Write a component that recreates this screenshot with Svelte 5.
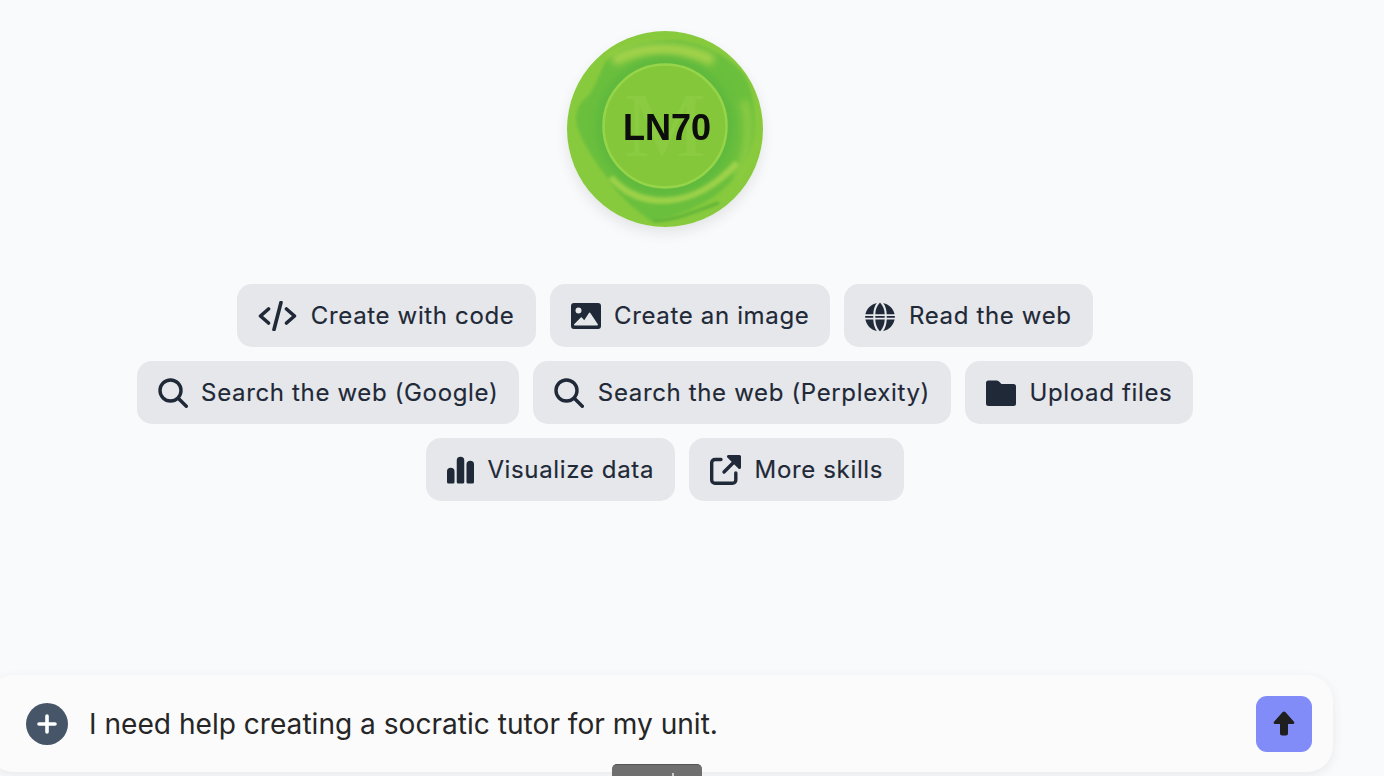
<script>
  const rows = [
    [
      { label: 'Create with code', icon: 'code' },
      { label: 'Create an image', icon: 'image' },
      { label: 'Read the web', icon: 'globe' }
    ],
    [
      { label: 'Search the web (Google)', icon: 'search' },
      { label: 'Search the web (Perplexity)', icon: 'search' },
      { label: 'Upload files', icon: 'folder' }
    ],
    [
      { label: 'Visualize data', icon: 'bars' },
      { label: 'More skills', icon: 'external' }
    ]
  ];
</script>

<div class="page">
  <div class="seal">
    <svg viewBox="0 0 196 196" width="196" height="196">
      <defs>
        <clipPath id="disc"><circle cx="98" cy="98" r="98" /></clipPath>
        <filter id="soft" filterUnits="userSpaceOnUse" x="0" y="0" width="196" height="196"><feGaussianBlur stdDeviation="3.500" /></filter>
        <filter id="soft2" filterUnits="userSpaceOnUse" x="0" y="0" width="196" height="196"><feGaussianBlur stdDeviation="1.800" /></filter>
        <filter id="tiny" filterUnits="userSpaceOnUse" x="0" y="0" width="196" height="196"><feGaussianBlur stdDeviation="0.500" /></filter>
      </defs>
      <g clip-path="url(#disc)">
        <rect width="196" height="196" fill="#88ca3d" />
        <path filter="url(#soft2)" fill="#6abf3c" d="M39 30C55 14 85 8 110 9C140 12 165 28 178 45C188 65 190 90 186 112C180 135 165 152 148 165C125 180 100 188 84 190C68 178 55 168 46 155C36 140 18 120 10 95C7 82 12 72 20 66C28 58 32 42 39 30Z" />
        <path filter="url(#soft)" fill="none" stroke="#a6d34c" stroke-width="11" d="M46 30C75 14 115 14 146 30" />
        <path filter="url(#soft)" fill="none" stroke="#8fcc42" stroke-width="8" d="M177 70C185 95 182 125 168 146" />
        <path filter="url(#soft2)" fill="none" stroke="#9dd248" stroke-width="7" d="M44 146C72 180 128 178 170 132" />
        <path filter="url(#soft2)" fill="none" stroke="#55ae38" stroke-width="2.500" d="M86 190C110 190 132 178 152 172" />
        <circle cx="98" cy="95" r="69" fill="#5fb93c" filter="url(#soft)" />
        <circle cx="98" cy="95" r="61.500" fill="#84c73a" stroke="#96d54a" stroke-width="2.500" filter="url(#tiny)" />
        <text x="98" y="125" text-anchor="middle" class="mono" filter="url(#tiny)">M</text>
        <text x="100" y="109" text-anchor="middle" class="code" filter="url(#tiny)">LN70</text>
      </g>
    </svg>
  </div>

  <div class="skills">
    {#each rows as row}
      <div class="row">
        {#each row as chip}
          <button class="chip" type="button">
            {#if chip.icon === 'code'}
              <svg class="ic" width="39" height="30" viewBox="0 0 39 30" fill="none" stroke="currentColor" stroke-width="3.600" stroke-linecap="round" stroke-linejoin="round"><path d="M10.500 8L2.500 15l8 7M28.500 8l8 7-8 7M23 1.500L16 28.500" /></svg>
            {:else if chip.icon === 'image'}
              <svg class="ic" width="30" height="30" viewBox="0 0 30 30"><path fill="currentColor" fill-rule="evenodd" d="M3 2h24a3 3 0 0 1 3 3v20a3 3 0 0 1-3 3H3a3 3 0 0 1-3-3V5a3 3 0 0 1 3-3ZM7.500 6.500a3 3 0 1 0 0 6a3 3 0 0 0 0-6ZM3.800 24.500h22.400a.8.8 0 0 0 .6-1.200L19.500 12.300a1 1 0 0 0-1.700 0l-4.600 7-2.100-2.600a1 1 0 0 0-1.600 0l-6.300 6.600a.7.7 0 0 0 .6 1.200Z" /></svg>
            {:else if chip.icon === 'globe'}
              <svg class="ic" width="30" height="30" viewBox="0 0 30 30"><path fill="currentColor" d="M10.300 13.200h9.400c-.1-4.800-1.800-8.800-4.700-11.700c-2.900 2.900-4.600 6.900-4.700 11.700ZM8.300 13.200c.1-4.600 1.300-8.400 3.500-11.300C6 3.200 1.600 7.600.4 13.200ZM21.700 13.200h7.900c-1.200-5.600-5.600-10-11.400-11.300c2.200 2.900 3.400 6.700 3.500 11.300ZM.2 14.900c0 .4-.2 1.300 0 1.900h8.100a42 42 0 0 1 0-1.900ZM10.300 14.900v1.900h9.400v-1.900ZM21.700 14.900v1.900h8.100c.2-.6 0-1.500 0-1.900ZM.4 18.500c1.200 5.900 5.600 10.300 11.400 11.600c-2.200-2.900-3.400-7-3.500-11.600ZM10.300 18.500c.1 4.800 1.800 9.100 4.700 12c2.900-2.900 4.600-7.200 4.700-12ZM21.700 18.500c-.1 4.600-1.300 8.700-3.500 11.600c5.800-1.300 10.200-5.700 11.400-11.600Z" /></svg>
            {:else if chip.icon === 'search'}
              <svg class="ic" width="30" height="30" viewBox="0 0 30 30" fill="none" stroke="currentColor" stroke-width="3.400" stroke-linecap="round"><circle cx="12.500" cy="12.500" r="10.500" /><path d="M20.500 20.500L28.300 28.300" /></svg>
            {:else if chip.icon === 'folder'}
              <svg class="ic" width="30" height="30" viewBox="0 0 30 30"><path fill="currentColor" d="M2.500 2.500h8c1 0 1.800.4 2.500 1l2.500 2.500h12a2.500 2.500 0 0 1 2.500 2.500v17a2.500 2.500 0 0 1-2.500 2.500h-25A2.500 2.500 0 0 1 0 25.500V5a2.500 2.500 0 0 1 2.500-2.500Z" /></svg>
            {:else if chip.icon === 'bars'}
              <svg class="ic" width="27" height="30" viewBox="0 0 27 30"><path fill="currentColor" d="M0 16.500a3.750 3.750 0 0 1 7.500 0v10.500a1.500 1.500 0 0 1-1.500 1.500H1.500A1.500 1.500 0 0 1 0 27ZM9.750 5.500a3.750 3.750 0 0 1 7.500 0V27a1.500 1.500 0 0 1-1.500 1.500h-4.500a1.500 1.500 0 0 1-1.500-1.500ZM19.500 9.500a3.750 3.750 0 0 1 7.500 0V27a1.500 1.500 0 0 1-1.500 1.500H21a1.500 1.500 0 0 1-1.500-1.500Z" /></svg>
            {:else}
              <svg class="ic" width="31" height="30" viewBox="0 0 31 30" fill="none" stroke="currentColor" stroke-width="3.400" stroke-linecap="round" stroke-linejoin="round"><path d="M11 4.500H5a3.300 3.300 0 0 0-3.300 3.300V25A3.300 3.300 0 0 0 5 28.300h17.500a3.300 3.300 0 0 0 3.300-3.300v-7M14 17L26 5" /><path fill="currentColor" stroke="none" d="M18.500 0h11a1.500 1.500 0 0 1 1.500 1.500V12.500a1.500 1.500 0 0 1-2.600 1L17.400 2.600A1.500 1.500 0 0 1 18.500 0Z" /></svg>
            {/if}
            <span>{chip.label}</span>
          </button>
        {/each}
      </div>
    {/each}
  </div>

  <div class="composer">
    <span class="plus">
      <svg width="20" height="20" viewBox="0 0 20 20" stroke="#fff" stroke-width="3.600" stroke-linecap="round"><path d="M10 2v16M2 10h16" /></svg>
    </span>
    <span class="prompt">I need help creating a socratic tutor for my unit.</span>
    <button class="send" type="button" aria-label="Send">
      <svg width="22" height="25" viewBox="0 0 22 25"><path fill="#1f1f1f" d="M11 .5c.5 0 1 .2 1.300.6l8.700 9.600c.8.900.2 2.300-1 2.300h-5v9.500a2 2 0 0 1-2 2H9a2 2 0 0 1-2-2V13H2c-1.200 0-1.800-1.400-1-2.300l8.700-9.600c.3-.4.800-.6 1.300-.6Z" /></svg>
    </button>
  </div>
  <div class="tab"><i></i></div>
</div>

<style>
  :global(body) {
    margin: 0;
    background: #f9fafb;
  }
  .page {
    position: relative;
    height: 776px;
    overflow: hidden;
    display: flex;
    flex-direction: column;
    font-family: Inter, "Liberation Sans", sans-serif;
    color: #1f2937;
  }
  .seal {
    width: 196px;
    height: 196px;
    margin: 31px 0 0 567px;
    border-radius: 50%;
    box-shadow: 0 6px 14px rgba(0, 0, 0, 0.09);
    flex: none;
  }
  .seal svg {
    display: block;
  }
  .code {
    font: 700 36px "Liberation Sans", Arial, sans-serif;
    fill: #080808;
  }
  .mono {
    font: 400 92px "Liberation Serif", serif;
    fill: #92d04c;
    opacity: 0.5;
  }
  .skills {
    width: 1330px;
    margin-top: 57px;
    display: flex;
    flex-direction: column;
    gap: 14px;
  }
  .row {
    display: flex;
    justify-content: center;
    gap: 14px;
  }
  .chip {
    height: 63px;
    padding: 0 21px;
    display: flex;
    align-items: center;
    gap: 13.500px;
    border: 0;
    border-radius: 15px;
    background: #e5e7eb;
    color: #1f2937;
    font-family: inherit;
    font-size: 24px;
    letter-spacing: 0.65px;
    -webkit-text-stroke: 0.15px currentColor;
  }
  .ic {
    flex: none;
    display: block;
  }
  .composer {
    margin: auto 0 4px -12px;
    width: 1345px;
    height: 97px;
    box-sizing: border-box;
    padding: 0 21px 0 38px;
    display: flex;
    align-items: center;
    background: #fbfbfb;
    border-radius: 26px;
    box-shadow: 0 3px 12px rgba(0, 0, 0, 0.07);
    flex: none;
  }
  .plus {
    width: 42px;
    height: 42px;
    border-radius: 50%;
    background: #475569;
    display: flex;
    align-items: center;
    justify-content: center;
    flex: none;
  }
  .prompt {
    margin-left: 21px;
    flex: 1;
    font-size: 28.100px;
    color: #262626;
  }
  .send {
    width: 56px;
    height: 56px;
    padding: 0;
    border: 0;
    border-radius: 11px;
    background: #818cf8;
    display: flex;
    align-items: center;
    justify-content: center;
    flex: none;
  }
  .tab {
    position: absolute;
    left: 612px;
    top: 764px;
    width: 90px;
    height: 14px;
    box-sizing: border-box;
    background: #6f6f6f;
    border-top: 1px solid #555;
    border-radius: 5px 5px 0 0;
  }
  .tab i {
    position: absolute;
    left: 60px;
    top: 8px;
    width: 2px;
    height: 3px;
    background: #ccc;
  }
</style>
